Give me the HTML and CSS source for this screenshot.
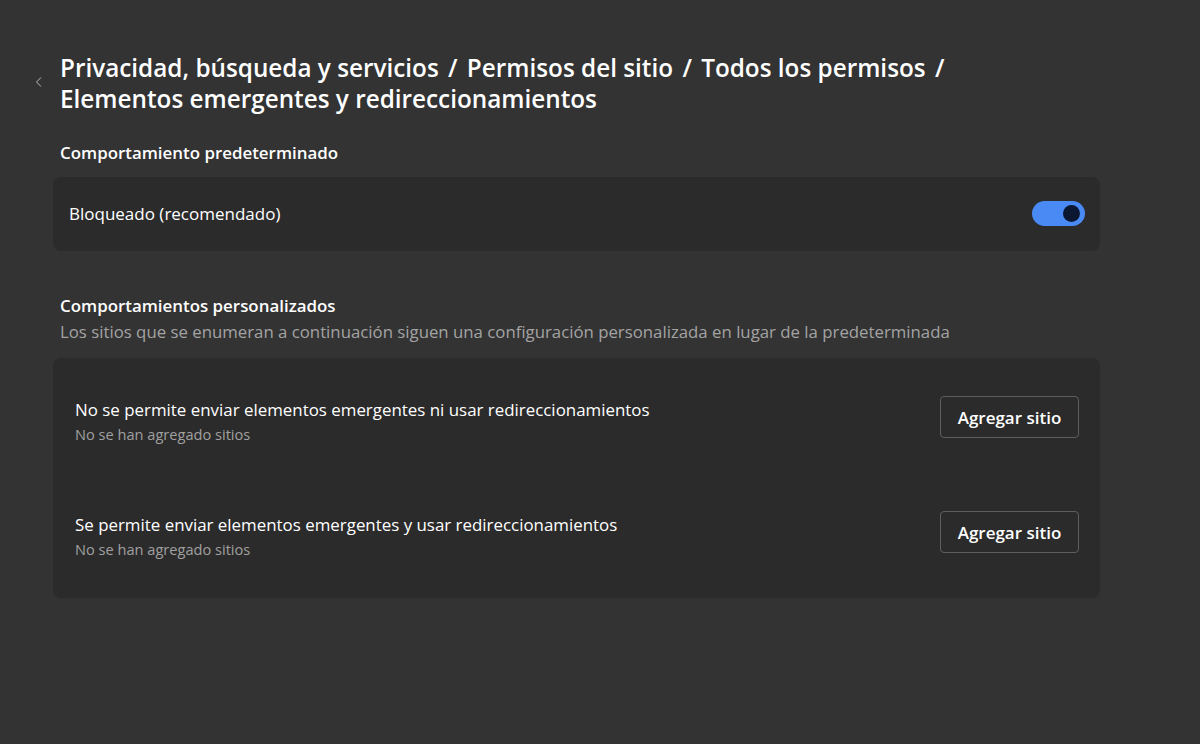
FILE: index.html
```html
<!DOCTYPE html>
<html lang="es">
<head>
<meta charset="utf-8">
<title>Elementos emergentes y redireccionamientos</title>
<link rel="stylesheet" href="styles.css">
</head>
<body>
<main class="page">
  <header class="header">
    <button class="back" aria-label="Atrás">
      <svg width="10" height="12" viewBox="0 0 10 12"><path d="M7 1.5 L2.5 6 L7 10.5" fill="none" stroke="#bdbdbd" stroke-width="1"/></svg>
    </button>
    <h1 class="title">Privacidad, búsqueda y servicios <span class="sep">/</span> Permisos del sitio <span class="sep">/</span> Todos los permisos <span class="sep">/</span><br>Elementos emergentes y redireccionamientos</h1>
  </header>

  <section class="section">
    <h2 class="section-title">Comportamiento predeterminado</h2>
    <div class="card card-toggle">
      <span class="label">Bloqueado (recomendado)</span>
      <span class="toggle"><span class="knob"></span></span>
    </div>
  </section>

  <section class="section section-custom">
    <h2 class="section-title">Comportamientos personalizados</h2>
    <p class="section-desc">Los sitios que se enumeran a continuación siguen una configuración personalizada en lugar de la predeterminada</p>
    <div class="card card-list">
      <div class="row">
        <div class="row-text">
          <div class="row-title">No se permite enviar elementos emergentes ni usar redireccionamientos</div>
          <div class="row-sub">No se han agregado sitios</div>
        </div>
        <button class="btn">Agregar sitio</button>
      </div>
      <div class="row">
        <div class="row-text">
          <div class="row-title">Se permite enviar elementos emergentes y usar redireccionamientos</div>
          <div class="row-sub">No se han agregado sitios</div>
        </div>
        <button class="btn">Agregar sitio</button>
      </div>
    </div>
  </section>
</main>
</body>
</html>
```

FILE: styles.css
```css
* { box-sizing: border-box; }
html, body {
  margin: 0;
  padding: 0;
  background: #333333;
  height: 100%;
}
body {
  font-family: "Open Sans", "Noto Sans", sans-serif;
  color: #ffffff;
}
.page {
  width: 1047px;
  margin-left: 53px;
  padding-top: 52px;
}
.header {
  position: relative;
  padding-left: 7px;
}
.back {
  position: absolute;
  left: -19px;
  top: 24px;
  background: none;
  border: 0;
  padding: 0;
  width: 10px;
  height: 12px;
  display: flex;
}
.title {
  margin: 0;
  font-size: 24.3px;
  font-weight: 600;
  line-height: 31px;
  color: #ffffff;
}
.sep { margin: 0 3px; }
.section { margin-top: 28px; }
.section-title {
  margin: 0 0 13px 7px;
  font-size: 16.9px;
  font-weight: 600;
  line-height: 22px;
}
.section-custom { margin-top: 44px; }
.section-custom .section-title { margin-bottom: 0; }
.section-desc {
  margin: 4px 0 15px 7px;
  font-size: 16.8px;
  line-height: 22px;
  color: #a3a3a3;
}
.card {
  background: #2b2b2b;
  border-radius: 8px;
}
.card-toggle {
  height: 74px;
  display: flex;
  align-items: center;
  justify-content: space-between;
  padding: 0 15px 2px 16px;
}
.label { font-size: 17px; color: #ffffff; }
.toggle {
  width: 53px;
  height: 25px;
  border-radius: 13px;
  background: #4a8af4;
  position: relative;
  display: block;
}
.knob {
  position: absolute;
  right: 5px;
  top: 4px;
  width: 17px;
  height: 17px;
  border-radius: 50%;
  background: #0b1631;
}
.card-list {
  padding: 38px 21px 40px 22px;
  display: flex;
  flex-direction: column;
  gap: 68px;
}
.row {
  display: flex;
  align-items: flex-start;
  justify-content: space-between;
}
.row-text { padding-top: 3px; }
.row-title { font-size: 16.9px; line-height: 22px; color: #ffffff; }
.row-sub { font-size: 14.6px; line-height: 18px; color: #a0a0a0; margin-top: 4px; }
.btn {
  width: 139px;
  height: 42px;
  background: #2b2b2b;
  border: 1px solid #5e5e5e;
  border-radius: 4px;
  color: #ffffff;
  font-family: inherit;
  font-size: 17px;
  font-weight: 600;
  cursor: pointer;
  padding: 0;
}
```
